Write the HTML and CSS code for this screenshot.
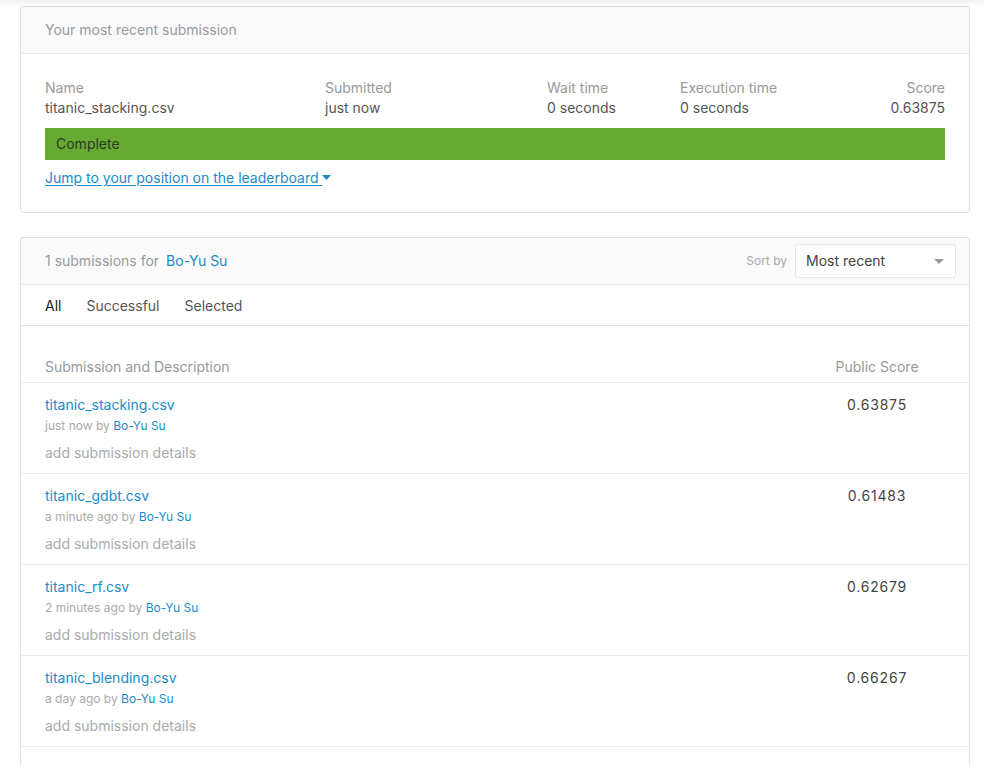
FILE: index.html
```html
<!DOCTYPE html>
<html>
<head>
<meta charset="utf-8">
<link rel="stylesheet" href="styles.css">
</head>
<body>
<div class="topshade"></div>
<main class="page">
  <section class="card">
    <header class="card-head">Your most recent submission</header>
    <div class="recent">
      <div class="meta-grid">
        <div class="cell c-name"><div class="lbl">Name</div><div class="val">titanic_stacking.csv</div></div>
        <div class="cell c-sub"><div class="lbl">Submitted</div><div class="val">just now</div></div>
        <div class="cell c-wait"><div class="lbl">Wait time</div><div class="val">0 seconds</div></div>
        <div class="cell c-exec"><div class="lbl">Execution time</div><div class="val">0 seconds</div></div>
        <div class="cell c-score"><div class="lbl">Score</div><div class="val">0.63875</div></div>
      </div>
      <div class="status">Complete</div>
      <a class="jump" href="#">Jump to your position on the leaderboard&nbsp;<svg class="caret" width="9" height="5" viewBox="0 0 9 5"><path d="M0 0h9L4.5 5z" fill="#1a8bc8"/></svg></a>
    </div>
  </section>

  <section class="card list">
    <header class="card-head list-head">
      <div class="count">1 submissions for <a href="#" class="user">Bo-Yu Su</a></div>
      <div class="sort">
        <span class="sort-lbl">Sort by</span>
        <div class="select"><span>Most recent</span><svg width="10" height="5" viewBox="0 0 10 5"><path d="M0 0h10L5 5z" fill="#9a9a9a"/></svg></div>
      </div>
    </header>
    <nav class="tabs">
      <span class="tab active">All</span>
      <span class="tab">Successful</span>
      <span class="tab">Selected</span>
    </nav>
    <div class="thead">
      <span class="th-desc">Submission and Description</span>
      <span class="th-score">Public Score</span>
    </div>
    <div class="row">
      <div class="desc">
        <a href="#" class="file">titanic_stacking.csv</a>
        <div class="when">just now by <a href="#" class="by">Bo-Yu Su</a></div>
        <div class="details">add submission details</div>
      </div>
      <div class="score">0.63875</div>
    </div>
    <div class="row">
      <div class="desc">
        <a href="#" class="file">titanic_gdbt.csv</a>
        <div class="when">a minute ago by <a href="#" class="by">Bo-Yu Su</a></div>
        <div class="details">add submission details</div>
      </div>
      <div class="score">0.61483</div>
    </div>
    <div class="row">
      <div class="desc">
        <a href="#" class="file">titanic_rf.csv</a>
        <div class="when">2 minutes ago by <a href="#" class="by">Bo-Yu Su</a></div>
        <div class="details">add submission details</div>
      </div>
      <div class="score">0.62679</div>
    </div>
    <div class="row">
      <div class="desc">
        <a href="#" class="file">titanic_blending.csv</a>
        <div class="when">a day ago by <a href="#" class="by">Bo-Yu Su</a></div>
        <div class="details">add submission details</div>
      </div>
      <div class="score">0.66267</div>
    </div>
    <div class="list-tail"></div>
  </section>
</main>
</body>
</html>
```
FILE: styles.css
```css
* { box-sizing: border-box; }
html, body { margin: 0; padding: 0; background: #fff; }
body {
  font-family: Inter, "Noto Sans", sans-serif;
  font-size: 14px;
  color: #555;
  overflow: hidden;
  height: 765px;
  position: relative;
}
a { text-decoration: none; }
.topshade {
  position: absolute;
  left: 0; right: 0; top: 0;
  height: 8px;
  background: linear-gradient(to bottom, rgba(0,0,0,0.05), rgba(0,0,0,0));
  pointer-events: none;
}
.page {
  padding: 6px 14px 0 20px;
  display: flex;
  flex-direction: column;
  gap: 24px;
}
.card {
  border: 1px solid #dedfe0;
  border-radius: 3px;
  background: #fff;
}
.card-head {
  height: 47px;
  background: #fafafa;
  border-bottom: 1px solid #e8e8e8;
  border-radius: 3px 3px 0 0;
  padding: 0 24px;
  display: flex;
  align-items: center;
  color: #999;
  line-height: 20px;
}
.recent {
  padding: 24px 24px 24px;
}
.meta-grid {
  display: grid;
  grid-template-columns: 280px 222px 133px 1fr auto;
  line-height: 20px;
}
.lbl { color: #999; }
.val { color: #555; }
.c-score { text-align: right; }
.status {
  margin-top: 10px;
  height: 32px;
  background: #66aa33;
  color: #2b3a20;
  line-height: 32px;
  padding-left: 11px;
}
.jump {
  display: inline-block;
  margin-top: 8px;
  line-height: 20px;
  color: #1a8bc8;
  text-decoration: underline;
  text-underline-offset: 2px;
}
.caret { vertical-align: 3px; }

.list { border-bottom: none; border-radius: 3px 3px 0 0; }
.list-head { justify-content: space-between; padding-right: 13px; }
.count { color: #999; }
.user { color: #1a8bc8; margin-left: 3px; }
.sort { display: flex; align-items: center; gap: 8px; }
.sort-lbl { font-size: 12px; color: #aaa; }
.select {
  width: 161px;
  height: 34px;
  background: #fff;
  border: 1px solid #e6e6e6;
  border-radius: 3px;
  display: flex;
  align-items: center;
  justify-content: space-between;
  padding: 0 11px 0 10px;
  color: #444;
}
.tabs {
  height: 41px;
  border-bottom: 1px solid #e0e0e0;
  display: flex;
  align-items: center;
  gap: 25px;
  padding: 0 24px;
  color: #555;
}
.tab.active { color: #222; }
.thead {
  height: 57px;
  border-bottom: 1px solid #ebebeb;
  display: flex;
  align-items: flex-end;
  padding: 0 24px 5px;
  color: #999;
  line-height: 20px;
}
.th-desc { flex: 1; }
.th-score { width: 136px; text-align: center; }
.row {
  height: 91px;
  border-bottom: 1px solid #ebebeb;
  display: flex;
  padding: 12px 24px 0;
}
.desc { flex: 1; display: flex; flex-direction: column; }
.file { color: #1a8bc8; line-height: 20px; }
.when { font-size: 12px; color: #aaa; line-height: 16px; margin-top: 3px; }
.by { color: #1a8bc8; }
.details { color: #aaa; line-height: 20px; margin-top: 9px; }
.score { width: 136px; text-align: center; line-height: 20px; color: #444; letter-spacing: 0.8px; }
.list-tail { height: 60px; }
```
